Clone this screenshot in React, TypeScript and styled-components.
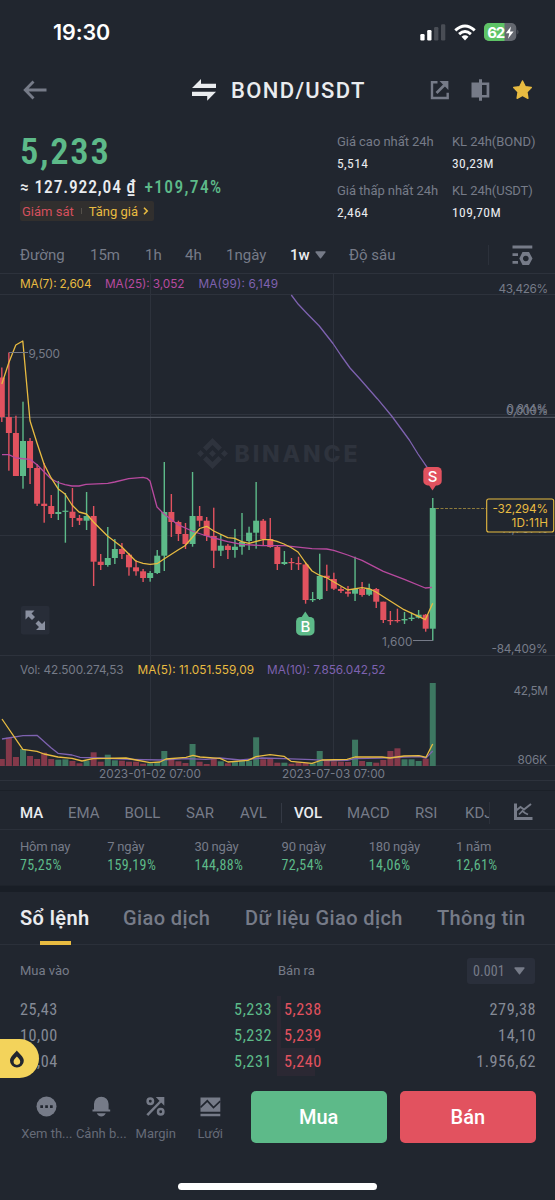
import { FC, Fragment } from "react";
import styled, { createGlobalStyle } from "styled-components";
import { SiBinance } from "react-icons/si";

const GlobalStyle = createGlobalStyle`
  * {
    box-sizing: border-box;
  }

  body {
    margin: 0;
    background: #21262f;
    color: #eaecef;
    font-family: Roboto, "Noto Sans", sans-serif;
  }

  svg {
    display: block;
    flex-shrink: 0;
  }
`;

const green = "#5dba89";
const red = "#e2525f";
const yellow = "#e8bb41";
const pink = "#b84a9f";
const purple = "#7e62b0";
const gray = "#767b88";
const numberFont = `"Roboto Condensed", Roboto, sans-serif`;

const Screen = styled.div`
  width: 555px;
  height: 1200px;
  display: flex;
  flex-direction: column;
  position: relative;
  overflow: hidden;
  background: #21262f;
`;

const StatusBar = styled.div`
  height: 64px;
  padding: 0 36px 0 53px;
  display: flex;
  align-items: center;
  justify-content: space-between;
`;

const Clock = styled.span`
  font-family: Inter, sans-serif;
  font-size: 21.5px;
  font-weight: 600;
  color: #fff;
  letter-spacing: -0.1px;
`;

const Header = styled.header`
  height: 52px;
  padding: 0 22px 0 23px;
  display: grid;
  grid-template-columns: 169px 1fr auto;
  align-items: center;
`;

const Pair = styled.h1`
  margin: 0;
  display: flex;
  align-items: center;
  gap: 15px;
  font-size: 22px;
  font-weight: 500;
  letter-spacing: 1.35px;
`;

const HeaderIcons = styled.div`
  display: flex;
  align-items: center;
  gap: 22px;
`;

const Summary = styled.section`
  height: 121px;
  padding: 18px 20px 0;
  display: flex;
  justify-content: space-between;
`;

const Price = styled.div`
  font-family: ${numberFont};
  font-size: 36.5px;
  font-weight: 600;
  line-height: 36px;
  letter-spacing: 1.7px;
  color: ${green};
`;

const Fiat = styled.div`
  margin-top: 6px;
  display: flex;
  gap: 8px;
  font-family: ${numberFont};
  font-size: 17.5px;
  font-weight: 500;
  line-height: 23px;
  letter-spacing: 0.85px;
`;

const Change = styled.span`
  color: ${green};
  letter-spacing: 1.35px;
`;

const Tag = styled.div`
  width: 134px;
  height: 20px;
  margin-top: 2px;
  padding: 0 0 0 2px;
  display: flex;
  align-items: center;
  border-radius: 2px;
  background: #312f2e;
  font-size: 13px;
  white-space: nowrap;
  color: ${yellow};
`;

const TagWarning = styled.span`
  margin-right: 7px;
  padding-right: 8px;
  color: #d5505d;
  background: linear-gradient(#54504a, #54504a) right center / 1px 6px no-repeat;
`;

const Stats = styled.div`
  width: 198px;
  margin-top: -1px;
  display: grid;
  grid-template-columns: 115px 1fr;
  grid-template-rows: 49px 49px;
`;

const Stat = styled.div`
  display: flex;
  flex-direction: column;
  gap: 3px;
  line-height: 18px;
  font-size: 13px;
  color: ${gray};
  white-space: nowrap;
  letter-spacing: -0.05px;
`;

const StatValue = styled.span`
  font-family: ${numberFont};
  font-size: 13.5px;
  letter-spacing: 0.4px;
  color: #eaecef;
`;

const Intervals = styled.nav`
  height: 36px;
  padding-left: 20px;
  display: grid;
  grid-template-columns: 70px 55px 40px 41px 64px 59px 139px 1fr;
  align-items: center;
  font-size: 15px;
  color: ${gray};
`;

const Interval = styled.span<{ $active?: boolean }>`
  display: flex;
  align-items: center;
  gap: 5px;
  color: ${(p) => (p.$active ? "#eaecef" : "inherit")};
  font-weight: ${(p) => (p.$active ? 500 : 400)};
`;

const ToolSlot = styled.div<{ $height: number; $pad: number }>`
  height: ${(p) => p.$height}px;
  padding-left: ${(p) => p.$pad}px;
  display: flex;
  align-items: center;
  border-left: 1px solid #2c313b;
`;

const Indicators = styled.div`
  height: 39px;
  padding: 6px 0 0 20px;
  display: flex;
  align-items: center;
  border-top: 1px solid #1b2028;
`;

const IndicatorList = styled.div`
  width: 469px;
  display: grid;
  grid-template-columns: 48px 56.5px 61.5px 54px 41px 13px 53px 68px 50px 24px;
  align-items: center;
  overflow: hidden;
  font-size: 15px;
  color: ${gray};
`;

const Indicator = styled.span<{ $active?: boolean }>`
  color: ${(p) => (p.$active ? "#eaecef" : "inherit")};
  font-weight: ${(p) => (p.$active ? 500 : 400)};
`;

const Divider = styled.span`
  width: 1px;
  height: 20px;
  background: #343944;
`;

const Performance = styled.section`
  height: 57px;
  padding: 8px 0 0 20px;
  display: grid;
  grid-template-columns: repeat(6, 87.2px);
  border-top: 1px solid #2b303a;
  border-bottom: 1px solid #1e232b;
`;

const Period = styled.div`
  display: flex;
  flex-direction: column;
  line-height: 18px;
  font-size: 13px;
  letter-spacing: -0.2px;
  color: ${gray};
`;

const PeriodValue = styled.span`
  font-family: ${numberFont};
  font-size: 14px;
  letter-spacing: 0.4px;
  color: ${green};
`;

const Gap = styled.div`
  height: 6px;
  background: #191e26;
`;

const Tabs = styled.nav`
  height: 53px;
  padding-left: 20px;
  display: grid;
  grid-template-columns: 103px 122px 192px 1fr;
  border-bottom: 1px solid #2b303a;
`;

const Tab = styled.span<{ $active?: boolean }>`
  justify-self: start;
  line-height: 53px;
  font-size: 20px;
  font-weight: ${(p) => (p.$active ? 600 : 500)};
  letter-spacing: 0.4px;
  color: ${(p) => (p.$active ? "#eaecef" : gray)};
  background: ${(p) =>
    p.$active ? `linear-gradient(${yellow}, ${yellow}) 20px bottom / 31px 4px no-repeat` : "none"};
`;

const BookHead = styled.div`
  height: 51px;
  padding: 0 20px;
  display: grid;
  grid-template-columns: 258px 1fr auto;
  align-items: center;
  font-size: 13px;
  color: ${gray};
`;

const StepSelect = styled.div`
  width: 68px;
  height: 26px;
  padding: 0 10px 0 6px;
  display: flex;
  align-items: center;
  justify-content: space-between;
  border-radius: 3px;
  background: #2a2f3b;
  font-family: ${numberFont};
  font-size: 14px;
  letter-spacing: 0.1px;
`;

const Row = styled.div`
  height: 26px;
  padding: 0 19px 0 20px;
  display: grid;
  grid-template-columns: 128px 129px 1fr;
  font-family: ${numberFont};
  font-size: 16.2px;
  line-height: 28px;
  letter-spacing: 0.55px;
  color: #858a96;
`;

const Bid = styled.span`
  padding-right: 5px;
  text-align: right;
  color: ${green};
`;

const Ask = styled.span<{ $depth: number }>`
  padding-left: 7px;
  display: flex;
  justify-content: space-between;
  background: linear-gradient(#2b2833, #2b2833) left / ${(p) => p.$depth}px 100% no-repeat;
`;

const AskPrice = styled.span`
  color: ${red};
`;

const Actions = styled.footer`
  height: 52px;
  margin-top: 17px;
  padding: 0 19px 0 19.5px;
  display: flex;
  gap: 13px;
`;

const Shortcuts = styled.div`
  width: 218px;
  flex-shrink: 0;
  display: flex;
`;

const Shortcut = styled.div`
  width: 54.5px;
  flex-shrink: 0;
  padding-top: 5px;
  display: flex;
  flex-direction: column;
  align-items: center;
  gap: 8px;
  font-size: 13px;
  line-height: 18px;
  white-space: nowrap;
  color: #666b78;
`;

const TradeButton = styled.button<{ $sell?: boolean }>`
  padding: 0;
  flex: 1;
  border: none;
  border-radius: 5px;
  background: ${(p) => (p.$sell ? red : green)};
  color: #fff;
  font-family: inherit;
  font-size: 20px;
  font-weight: 500;
`;

const HomeBar = styled.div`
  width: 199px;
  height: 7px;
  margin: 40px auto 0;
  border-radius: 4px;
  background: #fff;
`;

const HotBadge = styled.div`
  position: absolute;
  left: 0;
  top: 1039px;
  width: 39px;
  height: 39px;
  padding-left: 9px;
  display: flex;
  align-items: center;
  border-radius: 0 20px 20px 0;
  background: #f3d35b;
`;

const ChartSvg = styled.svg`
  font-family: Inter, sans-serif;
  font-size: 11.8px;
`;

const FIRST_X = 1.8;
const STEP = 7.065;

// high, body top, body bottom, low, volume top, rising (1) or falling (0)
const candles = [
  [367.5, 377.5, 417, 422, 759, 0],
  [352.5, 417, 433, 470.7, 737.7, 0],
  [415.7, 433, 476, 476, 757, 0],
  [401.7, 441, 476, 488.7, 749, 1],
  [438, 441, 468, 484, 756, 0],
  [464, 468, 503.7, 506, 759, 0],
  [463, 503.7, 506, 522.7, 752.7, 0],
  [495, 506, 514, 518, 759, 0],
  [481, 512, 514, 520, 759.7, 1],
  [493, 510.7, 511.9, 542.7, 759.3, 1],
  [488, 511.7, 518, 527, 761, 0],
  [515, 518, 520.7, 525, 763.3, 0],
  [492, 516, 520.7, 530, 760.7, 1],
  [506, 516, 561.7, 586, 752.3, 0],
  [554, 561.7, 565, 570, 761.7, 0],
  [527, 558, 565, 566.7, 754.7, 1],
  [539, 549, 558, 564, 760.3, 1],
  [543, 549, 554, 559, 760.7, 0],
  [553, 554.7, 567.3, 575.7, 761.7, 0],
  [560, 567.3, 571.3, 575.7, 761.7, 0],
  [569, 571.3, 578, 582, 763.7, 0],
  [571, 573, 578, 581.7, 763.3, 1],
  [550, 555.7, 573, 574, 762.3, 1],
  [462, 512, 555.7, 571, 751, 1],
  [494, 512, 522, 537, 759.3, 0],
  [520.7, 522, 534, 541, 761.3, 0],
  [523, 534, 544, 549, 763, 0],
  [472, 516, 544, 546.7, 744, 1],
  [506, 516, 520.7, 526.7, 761.7, 0],
  [517, 520.7, 536, 541, 764, 0],
  [507.7, 536, 550.7, 568, 759, 0],
  [534, 545.7, 550.7, 556, 761.3, 1],
  [544, 545.7, 550, 559, 763.3, 0],
  [529, 546.7, 550, 557.7, 761, 1],
  [513, 542, 546.7, 554.7, 760, 1],
  [526.7, 532.7, 541, 550, 760.7, 1],
  [482, 520.7, 532.7, 548.7, 737.3, 1],
  [519, 520.7, 539, 545, 759.3, 0],
  [518, 539, 547, 547.7, 758.3, 0],
  [545, 547, 564, 570, 762.7, 0],
  [551, 562, 564, 565, 762.7, 1],
  [558, 562, 563.2, 570, 763.7, 0],
  [556.7, 563, 564.3, 570, 762.3, 0],
  [563, 564.5, 600, 603.7, 762.7, 0],
  [592, 599, 600.2, 602, 763.3, 1],
  [553.7, 576, 599, 600, 751, 1],
  [564.7, 575.7, 578, 591, 761, 0],
  [572.7, 579, 588.7, 590, 761.3, 0],
  [586.7, 589, 591, 593, 761.7, 0],
  [586, 591.7, 593.7, 596.7, 762, 0],
  [556.7, 589, 593.7, 601, 739.7, 1],
  [582, 589, 595, 596.7, 761, 0],
  [583.7, 589, 594.7, 596, 762, 1],
  [588, 589, 601.7, 608, 762.7, 0],
  [601.7, 601.7, 620, 623, 760, 0],
  [611, 620, 621.2, 625, 751, 0],
  [608.7, 620, 621.2, 622.7, 748.3, 0],
  [612, 619, 620.4, 624, 759.3, 1],
  [612.7, 617.7, 619, 621, 759.3, 1],
  [610, 614.7, 617.7, 618.5, 761, 1],
  [614, 614.7, 628.7, 631.7, 758.7, 0],
  [498, 508, 628.7, 640.7, 683, 1],
];

const lines = [
  {
    color: purple,
    points:
      "291.3,295 298.3,304.3 307,313.5 319.3,326 333,343.5 340.7,355 350,368 360,379 377.3,398.7 391.7,416 409.3,440 418,454 427.3,467.7",
  },
  {
    color: pink,
    points:
      "2,454.7 8.7,454.7 16,458 30,459.3 37,464.7 44,471.7 51,478.7 58,482.5 65,484.7 72,486 79,486 86,484.3 107.7,483.3 114.7,482 128.7,478.7 143,477.3 147,478.3 150,481 157,507 164,514 178,524.7 192,531 206.7,536 227.7,541.7 241.7,544.3 263,545.7 284,545.7 312,548.7 326.7,549 333.7,550.3 347.7,555 362,560.3 383.3,571.3 404.3,579.3 425.3,588 432,587.3",
  },
  {
    color: yellow,
    points:
      "1.8,384 8.7,363 15.8,345 22.8,341 30,420.7 37,443 44,464 51,477.7 58,488.7 65,494 72,505 79,512 86.5,514 93.5,522 107.5,536 121.6,546.7 135.7,561 143,563.3 150,564.3 157,563.7 164,559 178,550 185,545.7 192,537.7 199.7,528.5 206.7,526.3 213.7,531 227.7,537.7 234.7,538.3 241.7,541.7 249,543.3 263,539.7 270,539.7 277,541.3 284,544 291,547.5 298,552 305,562 312,571 319,575 326.7,577.7 347.7,590 362,587.7 370,589 376,592 404,609.7 425.3,619.7 432.7,603.3",
  },
  {
    color: purple,
    points:
      "2,739 23,735.7 37,735.3 51,747.7 58,753.3 72,755 80,757.3 100,758 130,759.3 160,760 186,758.7 206,759.3 220,758 240,760 262,758 284,758.7 312,759.7 330,760.7 347,760.3 355,758.7 380,758 404,757 420,756.7 426,758 432.7,751",
  },
  {
    color: yellow,
    points:
      "2,719 22.8,749.3 37,751.3 44,754 58,757 72,758.3 82,761 93,758.7 126,758 136,760 150,762.7 160,762 166,759 186,757.3 193,755.3 200,757 220,758.3 228,762 248,760.3 256,756.7 270,754.7 284,756.3 291,761.3 312,763.3 322,760 347,759.3 355,757 382,757 390,758 404,756 419,755.7 426,757.3 432.7,744",
  },
];

const labels: { text: string; x: number; y: number; w: number; color?: string }[] = [
  { text: "MA(7): 2,604", x: 20, y: 288, w: 71.5, color: yellow },
  { text: "MA(25): 3,052", x: 105, y: 288, w: 79.5, color: pink },
  { text: "MA(99): 6,149", x: 198.5, y: 288, w: 79.5, color: purple },
  { text: "43,426%", x: 498.5, y: 292.8, w: 49.5 },
  { text: "0,814%", x: 506.5, y: 413.3, w: 41.5 },
  { text: "0,000%", x: 506, y: 415, w: 42 },
  { text: "-41,797%", x: 493, y: 533, w: 55 },
  { text: "-84,409%", x: 491.5, y: 652.8, w: 56 },
  { text: "9,500", x: 28.5, y: 357.5, w: 31.5 },
  { text: "1,600", x: 382, y: 645.5, w: 30.5 },
  { text: "Vol: 42.500.274,53", x: 20, y: 674.3, w: 103.5 },
  { text: "MA(5): 11.051.559,09", x: 137.5, y: 674.3, w: 116.5, color: yellow },
  { text: "MA(10): 7.856.042,52", x: 267, y: 674.3, w: 118.5, color: purple },
  { text: "42,5M", x: 513.5, y: 695, w: 34.5 },
  { text: "806K", x: 517.5, y: 763.5, w: 29.5 },
  { text: "2023-01-02 07:00", x: 99, y: 777.8, w: 102 },
  { text: "2023-07-03 07:00", x: 282, y: 777.8, w: 103 },
];

const Chart: FC = () => (
  <ChartSvg width="555" height="517" viewBox="0 273 555 517">
    <g stroke="#2d323c" strokeWidth="1">
      <path d="M0 273.5H555M0 294.5H555M0 414.5H555M0 535.5H555M0 655.5H555M0 765.5H555M0 780.5H555" />
      <path d="M150.5 273V766M333.5 273V766" />
    </g>
    <path d="M0 417.3H555" stroke="#4d525c" strokeWidth="1.2" />

    <SiBinance x="197" y="438" size={31} color="#2e333d" />
    <text x="234.5" y="461.8" fontSize="23" fontWeight="800" fill="#2e333d" textLength="123">
      BINANCE
    </text>

    {candles.map(([high, top, bottom, low, volume, up], i) => {
      const x = FIRST_X + STEP * i;
      return (
        <Fragment key={i}>
          <rect x={x - 3} y={volume} width="6" height={766 - volume} fill={up ? "#3d7761" : "#84394a"} />
          <g fill={up ? green : red}>
            <rect x={x - 0.7} y={high} width="1.4" height={low - high} />
            <rect x={x - 3} y={top} width="6" height={bottom - top} />
          </g>
        </Fragment>
      );
    })}

    {lines.map((line, i) => (
      <polyline key={i} points={line.points} fill="none" stroke={line.color} strokeWidth="1.3" strokeLinejoin="round" />
    ))}

    <path d="M9 352.5H28M413 640.5H433" stroke="#767b88" />
    {labels.map((l) => (
      <text key={l.text} x={l.x} y={l.y} textLength={l.w} fill={l.color || gray}>
        {l.text}
      </text>
    ))}

    <path d="M436 508.5H486" stroke="#8d7a3c" strokeDasharray="3 1.5" />
    <rect x="486.7" y="499" width="67" height="33" rx="2" fill="#21262f" stroke={yellow} strokeWidth="1.1" />
    <g fill={yellow}>
      <text x="492.5" y="513.3" textLength="55.5">-32,294%</text>
      <text x="511.5" y="527" textLength="36.5">1D:11H</text>
    </g>

    <path d="M428.5 484.5L432.5 490.5L436.5 484.5Z" fill={red} />
    <rect x="423.3" y="467" width="18.4" height="18.4" rx="4.5" fill={red} />
    <path d="M301.3 617.5L305.3 611.5L309.3 617.5Z" fill={green} />
    <rect x="296.1" y="617" width="18.4" height="18.4" rx="4.5" fill={green} />
    <g fill="#fff" fontSize="15" fontWeight="500" textAnchor="middle">
      <text x="432.5" y="481.6">S</text>
      <text x="305.4" y="631.6">B</text>
    </g>

    <rect x="21" y="606" width="28.5" height="28.5" rx="2" fill="#282d38" />
    <path
      d="M25.5 610.5H34.5L31.5 613.5L35 617L32 620L28.5 616.5L25.5 619.5ZM45 630H36L39 627L35.5 623.5L38.5 620.5L42 624L45 621Z"
      fill="#8a90a0"
    />
  </ChartSvg>
);

const Caret: FC<{ size?: number }> = ({ size = 11 }) => (
  <svg width={size} height="8" viewBox="0 0 11 8">
    <path d="M1 0.3H10Q11 0.6 10.4 1.5L6 7.3Q5.5 7.8 5 7.3L0.6 1.5Q0 0.6 1 0.3Z" fill={gray} />
  </svg>
);

const StatusIcons: FC = () => (
  <svg width="100" height="20" viewBox="419 21 100 20">
    <rect x="420.3" y="33" width="4.3" height="6.4" rx="1.2" fill="#fff" />
    <rect x="427.2" y="29" width="4.3" height="10.4" rx="1.2" fill="#fff" />
    <rect x="434.1" y="26" width="4.3" height="13.4" rx="1.2" fill="#494d55" />
    <rect x="441" y="23.3" width="4.3" height="16.1" rx="1.2" fill="#494d55" />
    <g fill="none" stroke="#fff" strokeWidth="3">
      <path d="M455.3 29.4Q465 20.6 474.7 29.4" />
      <path d="M459.1 33.1Q465 27.9 470.9 33.1" />
    </g>
    <path d="M461.5 35.7Q465 32.9 468.5 35.7L465 39.4Z" fill="#fff" />
    <clipPath id="cell">
      <rect x="484" y="22" width="32.3" height="18" rx="5" />
    </clipPath>
    <g clipPath="url(#cell)">
      <rect x="484" y="22" width="33" height="18" fill="#63676f" />
      <rect x="484" y="22" width="20.5" height="18" fill="#5ec466" />
    </g>
    <path d="M517.5 28.5Q519.3 31 517.5 33.5Z" fill="#63676f" />
    <text x="487.2" y="36.5" fontFamily="Inter, sans-serif" fontSize="15" fontWeight="700" fill="#fff" textLength="18">
      62
    </text>
    <path d="M511 25.5L505.8 32.3H509.3L508 37.7L513.6 30.5H510Z" fill="#fff" />
  </svg>
);

const App: FC = () => {
  return (
    <Screen>
      <GlobalStyle />

      <StatusBar>
        <Clock>19:30</Clock>
        <StatusIcons />
      </StatusBar>

      <Header>
        <svg width="24" height="20" viewBox="0 0 24 20">
          <path d="M23.5 10H3M10.5 1.5L2.2 10L10.5 18.5" fill="none" stroke={gray} strokeWidth="2.8" />
        </svg>
        <Pair>
          <svg width="24" height="22" viewBox="0 0 24 22">
            <path d="M0 9L9 0V4.7H24V9ZM24 12.8L15.2 21.8V17H0V12.8Z" fill="#eaecef" />
          </svg>
          BOND/USDT
        </Pair>
        <HeaderIcons>
          <svg width="19" height="20" viewBox="0 0 19 20">
            <path d="M7.5 2.2H2V18H17.7V12.8" fill="none" stroke={gray} strokeWidth="2.4" />
            <path d="M6.5 13L14.5 5" stroke={gray} strokeWidth="2.6" />
            <path d="M9.5 1H18.4V10Z" fill={gray} />
          </svg>
          <svg width="19" height="22" viewBox="0 0 19 22">
            <path d="M0.5 3.5H8V0.3H11V3.5H18.3V18.5H11V21.8H8V18.5H0.5ZM11 6V16H15.6V6Z" fill={gray} fillRule="evenodd" />
          </svg>
          <svg width="21" height="22" viewBox="0 0 21 22">
            <path
              d="M10.5 2L13.2 7.6L19.3 8.5L14.9 12.9L15.9 19.3L10.5 16.5L5.1 19.3L6.1 12.9L1.7 8.5L7.8 7.6Z"
              fill={yellow}
              stroke={yellow}
              strokeWidth="1.4"
              strokeLinejoin="round"
            />
          </svg>
        </HeaderIcons>
      </Header>

      <Summary>
        <div>
          <Price>5,233</Price>
          <Fiat>
            <span>≈ 127.922,04 ₫</span>
            <Change>+109,74%</Change>
          </Fiat>
          <Tag>
            <TagWarning>Giám sát</TagWarning>
            Tăng giá
            <svg width="14" height="8" viewBox="0 0 14 8">
              <path d="M6 0.8L9.2 4L6 7.2" fill="none" stroke={yellow} strokeWidth="1.6" />
            </svg>
          </Tag>
        </div>
        <Stats>
          <Stat>
            Giá cao nhất 24h
            <StatValue>5,514</StatValue>
          </Stat>
          <Stat>
            KL 24h(BOND)
            <StatValue>30,23M</StatValue>
          </Stat>
          <Stat>
            Giá thấp nhất 24h
            <StatValue>2,464</StatValue>
          </Stat>
          <Stat>
            KL 24h(USDT)
            <StatValue>109,70M</StatValue>
          </Stat>
        </Stats>
      </Summary>

      <Intervals>
        <Interval>Đường</Interval>
        <Interval>15m</Interval>
        <Interval>1h</Interval>
        <Interval>4h</Interval>
        <Interval>1ngày</Interval>
        <Interval $active>
          1w
          <Caret />
        </Interval>
        <Interval>Độ sâu</Interval>
        <ToolSlot $height={20} $pad={23}>
          <svg width="21" height="21" viewBox="0 0 21 21">
            <path d="M0.5 0.5H20.3V3.5H0.5ZM0.5 8.2H6V11H0.5ZM0.5 16H6V18.8H0.5Z" fill={gray} />
            <path d="M10.5 7H17L20.5 13.5L17 20H10.5L7.3 13.5ZM13.8 10.7A2.8 2.8 0 1 0 13.81 10.7Z" fill={gray} fillRule="evenodd" />
          </svg>
        </ToolSlot>
      </Intervals>

      <Chart />

      <Indicators>
        <IndicatorList>
          <Indicator $active>MA</Indicator>
          <Indicator>EMA</Indicator>
          <Indicator>BOLL</Indicator>
          <Indicator>SAR</Indicator>
          <Indicator>AVL</Indicator>
          <Divider />
          <Indicator $active>VOL</Indicator>
          <Indicator>MACD</Indicator>
          <Indicator>RSI</Indicator>
          <Indicator>KDJ</Indicator>
        </IndicatorList>
        <ToolSlot $height={22} $pad={24}>
          <svg width="19" height="20" viewBox="0 0 19 20">
            <path d="M1.5 0.5V15.5H18.5" fill="none" stroke={gray} strokeWidth="3" />
            <path d="M1.5 8L6.5 4L10 6.5L17 1" fill="none" stroke={gray} strokeWidth="2" />
            <path d="M5 11.5L8.5 8L11 10L14 11.5" fill="none" stroke={gray} strokeWidth="1.7" />
          </svg>
        </ToolSlot>
      </Indicators>

      <Performance>
        {[
          ["Hôm nay", "75,25%"],
          ["7 ngày", "159,19%"],
          ["30 ngày", "144,88%"],
          ["90 ngày", "72,54%"],
          ["180 ngày", "14,06%"],
          ["1 năm", "12,61%"],
        ].map(([label, value]) => (
          <Period key={label}>
            {label}
            <PeriodValue>{value}</PeriodValue>
          </Period>
        ))}
      </Performance>
      <Gap />

      <Tabs>
        <Tab $active>Sổ lệnh</Tab>
        <Tab>Giao dịch</Tab>
        <Tab>Dữ liệu Giao dịch</Tab>
        <Tab>Thông tin</Tab>
      </Tabs>

      <BookHead>
        <span>Mua vào</span>
        <span>Bán ra</span>
        <StepSelect>
          0.001
          <Caret />
        </StepSelect>
      </BookHead>

      <Row>
        <span>25,43</span>
        <Bid>5,233</Bid>
        <Ask $depth={4}>
          <AskPrice>5,238</AskPrice>
          <span>279,38</span>
        </Ask>
      </Row>
      <Row>
        <span>10,00</span>
        <Bid>5,232</Bid>
        <Ask $depth={4}>
          <AskPrice>5,239</AskPrice>
          <span>14,10</span>
        </Ask>
      </Row>
      <Row>
        <span>15,04</span>
        <Bid>5,231</Bid>
        <Ask $depth={38}>
          <AskPrice>5,240</AskPrice>
          <span>1.956,62</span>
        </Ask>
      </Row>

      <Actions>
        <Shortcuts>
          <Shortcut>
            <svg width="21" height="21" viewBox="0 0 21 21">
              <circle cx="10.5" cy="10.5" r="10" fill={gray} />
              <path d="M4.3 9.2H7V11.9H4.3ZM9.2 9.2H11.9V11.9H9.2ZM14 9.2H16.7V11.9H14Z" fill="#21262f" />
            </svg>
            Xem th...
          </Shortcut>
          <Shortcut>
            <svg width="21" height="21" viewBox="0 0 21 21">
              <path d="M1.5 15.5V13.5H3V8A7.3 7.3 0 0 1 17.6 8V13.5H19.2V15.5ZM5.8 17.3H14.8Q13 20.6 10.3 20.6Q7.6 20.6 5.8 17.3Z" fill={gray} />
            </svg>
            Cảnh b...
          </Shortcut>
          <Shortcut>
            <svg width="21" height="21" viewBox="0 0 21 21">
              <g fill="none" stroke={gray} strokeWidth="2.5">
                <circle cx="5.3" cy="5.3" r="2.7" />
                <circle cx="15.7" cy="15.8" r="2.7" />
                <path d="M2.3 19.2L16.5 4.5" />
              </g>
              <path d="M10.8 1H19.3V9.8Z" fill={gray} />
            </svg>
            Margin
          </Shortcut>
          <Shortcut>
            <svg width="21" height="21" viewBox="0 0 21 21">
              <path d="M0.5 1.5H20.3V15.8H0.5ZM0.5 17.8H20.3V20.3H0.5Z" fill={gray} />
              <path d="M0.5 11.5L7.3 4.8L13.5 11.5L20.3 5.2" fill="none" stroke="#21262f" strokeWidth="1.7" />
            </svg>
            Lưới
          </Shortcut>
        </Shortcuts>
        <TradeButton>Mua</TradeButton>
        <TradeButton $sell>Bán</TradeButton>
      </Actions>

      <HomeBar />

      <HotBadge>
        <svg width="16" height="18" viewBox="0 0 16 18">
          <path
            d="M7.8 0.5C9.5 3.2 14.8 6.3 14.8 10.7A6.9 6.9 0 0 1 1 10.7C1 6.3 6.1 3.2 7.8 0.5ZM7.9 6.5C6.8 8 4.6 9.3 4.6 11.6A3.3 3.3 0 0 0 11.2 11.6C11.2 9.3 9 8 7.9 6.5Z"
            fill="#21262f"
            fillRule="evenodd"
          />
        </svg>
      </HotBadge>
    </Screen>
  );
};

export default App;
